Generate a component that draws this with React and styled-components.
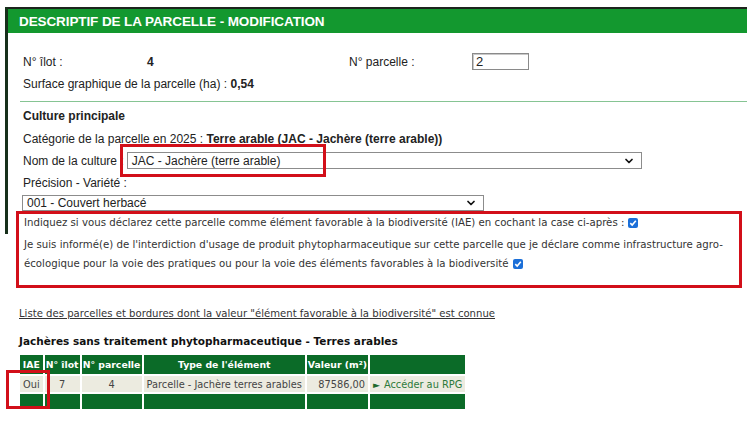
import styled, { createGlobalStyle } from "styled-components";
import { ChevronDown } from "lucide-react";

//------------------------------------------------------------------------

const GlobalStyle = createGlobalStyle`
    body {
        margin: 0;
        background: white;
        font-family: "Liberation Sans", Arial, sans-serif;
        color: #222;
    }
`;

const Page = styled.div`
    width: 747px;
    height: 436px;
    overflow: hidden;
    padding-top: 7px;
    box-sizing: border-box;
`;

const Panel = styled.div`
    position: relative;
    margin-left: 5px;
    padding-left: 3px;
    border-top: 2px solid #1d241d;

    &::before {
        content: "";
        position: absolute;
        left: 0;
        top: -2px;
        width: 3px;
        height: 227px;
        background: #17301b;
    }
`;

const Header = styled.div`
    height: 24px;
    display: flex;
    align-items: center;
    padding-left: 11px;
    background: #13982f;
    color: white;
    font-weight: bold;
    font-size: 13.5px;
    letter-spacing: -0.1px;
`;

const Fields = styled.div`
    padding: 20px 0 0 15px;
    font-size: 12px;
`;

const Row = styled.div`
    display: flex;
    align-items: center;
    height: ${(p) => p.$h || 14}px;
    margin-top: ${(p) => p.$mt || 0}px;
`;

const Cell = styled.span`
    width: ${(p) => p.$w}px;
    flex-shrink: 0;
    font-weight: ${(p) => (p.$bold ? "bold" : "normal")};
`;

const Bold = styled.b`
    font-weight: bold;
`;

const NumInput = styled.div`
    width: 52px;
    height: 15px;
    border: 1px solid #8a8a8a;
    box-shadow: inset 1px 1px 0 #c8c8c8;
    font-size: 13px;
    line-height: 15px;
    padding-left: 3px;
`;

const Rule = styled.div`
    height: 1px;
    background: #86c493;
    margin: 10px 0 0 -3px;
`;

const SelectBox = styled.div`
    width: ${(p) => p.$w}px;
    height: ${(p) => p.$h || 17}px;
    box-sizing: border-box;
    border: 1px solid #8c8c8c;
    display: flex;
    align-items: center;
    justify-content: space-between;
    padding: 0 6px 0 4px;
    margin-left: ${(p) => p.$ml || 0}px;
    font-size: 12px;
    background: white;
`;

const Mark = styled.div`
    position: absolute;
    left: ${(p) => p.$l}px;
    top: ${(p) => p.$t}px;
    width: ${(p) => p.$w}px;
    height: ${(p) => p.$h}px;
    border: 3px solid #d20f19;
    box-sizing: border-box;
    pointer-events: none;
`;

const NameRow = styled(Row)`
    position: relative;
`;

const IaeBox = styled.div`
    margin: 0 5px 0 8px;
    padding: 1px 6px 12px 5px;
    border: 3px solid #d20f19;
    font-family: "DejaVu Sans", Verdana, sans-serif;
    font-size: 10.2px;
    color: #333;
`;

const IaeLine = styled.p`
    margin: ${(p) => p.$mt || 0}px 0 0;
    line-height: ${(p) => p.$lh}px;
`;

const Tick = styled.span`
    display: inline-flex;
    vertical-align: -1px;
    margin-left: 4px;
    width: 10px;
    height: 10px;
    border-radius: 2px;
    background: #1b6fd8;
    align-items: center;
    justify-content: center;
`;

const Lower = styled.div`
    padding: 19px 0 0 19px;
    font-family: "DejaVu Sans", Verdana, sans-serif;
    font-size: 10px;
    color: #333;
`;

const ListLink = styled.div`
    text-decoration: underline;
    line-height: 14px;
    font-size: 10.1px;
`;

const Title = styled.div`
    margin-top: 13px;
    line-height: 14px;
    font-weight: bold;
    font-size: 10.5px;
    color: #111;
`;

const TableWrap = styled.div`
    position: relative;
    margin: 7px 0 0 -1px;
    width: fit-content;
`;

const Table = styled.table`
    border-collapse: separate;
    border-spacing: 2px;
    margin-top: -2px;
    font-size: 9.8px;
`;

const Th = styled.th`
    background: #0b6b28;
    color: white;
    height: 19px;
    padding: 0 1px;
    font-weight: bold;
    font-size: 9.3px;
    width: ${(p) => p.$w}px;
    white-space: nowrap;
`;

const Td = styled.td`
    background: ${(p) => (p.$foot ? "#0b6b28" : "#ecebe0")};
    height: ${(p) => (p.$foot ? 15 : 16)}px;
    padding: 0 3px;
    text-align: ${(p) => p.$align || "center"};
    color: #444;
    white-space: nowrap;
`;

const RpgLink = styled.span`
    color: #2d7a3a;
`;

const Arrow = styled.span`
    color: #1f6a2c;
    font-size: 9px;
    margin-right: 4px;
`;

//------------------------------------------------------------------------

function Tickbox() {
    return (
        <Tick>
            <svg width="8" height="8" viewBox="0 0 8 8">
                <path d="M1.3 4.2 L3.2 6 L6.8 1.8" fill="none" stroke="white" strokeWidth="1.6" />
            </svg>
        </Tick>
    );
}

function App() {
    const columns = [
        ["IAE", 18],
        ["N° îlot", 32],
        ["N° parcelle", 58],
        ["Type de l'élément", 155],
        ["Valeur (m²)", 57],
        ["", 90],
    ];

    return (
        <Page>
            <GlobalStyle />
            <Panel>
                <Header>DESCRIPTIF DE LA PARCELLE - MODIFICATION</Header>
                <Fields>
                    <Row $h={17}>
                        <Cell $w={124}>N° îlot :</Cell>
                        <Cell $w={202} $bold>4</Cell>
                        <Cell $w={123}>N° parcelle :</Cell>
                        <NumInput>2</NumInput>
                    </Row>
                    <Row $mt={7}>
                        Surface graphique de la parcelle (ha) :&nbsp;<Bold>0,54</Bold>
                    </Row>
                    <Rule />
                    <Row $mt={7}>
                        <Bold>Culture principale</Bold>
                    </Row>
                    <Row $mt={9}>
                        Catégorie de la parcelle en 2025 :&nbsp;
                        <Bold>Terre arable (JAC - Jachère (terre arable))</Bold>
                    </Row>
                    <NameRow $h={17} $mt={6}>
                        Nom de la culture :
                        <SelectBox $w={515} $ml={3}>
                            JAC - Jachère (terre arable)
                            <ChevronDown size={12} strokeWidth={3.5} color="#111" />
                        </SelectBox>
                        <Mark $l={97} $t={-8} $w={206} $h={33} />
                    </NameRow>
                    <Row $mt={7}>Précision - Variété :</Row>
                    <Row $h={16} $mt={5}>
                        <SelectBox $w={462} $h={16} $ml={-1}>
                            001 - Couvert herbacé
                            <ChevronDown size={12} strokeWidth={3.5} color="#111" />
                        </SelectBox>
                    </Row>
                </Fields>
                <IaeBox>
                    <IaeLine $lh={16}>
                        Indiquez si vous déclarez cette parcelle comme élément favorable à la
                        biodiversité (IAE) en cochant la case ci-après :
                        <Tickbox />
                    </IaeLine>
                    <IaeLine $lh={19} $mt={4}>
                        Je suis informé(e) de l'interdiction d'usage de produit
                        phytopharmaceutique sur cette parcelle que je déclare comme
                        infrastructure agro-écologique pour la voie des pratiques ou pour la
                        voie des éléments favorables à la biodiversité
                        <Tickbox />
                    </IaeLine>
                </IaeBox>
            </Panel>
            <Lower>
                <ListLink>
                    Liste des parcelles et bordures dont la valeur "élément favorable à la
                    biodiversité" est connue
                </ListLink>
                <Title>Jachères sans traitement phytopharmaceutique - Terres arables</Title>
                <TableWrap>
                    <Table>
                        <thead>
                            <tr>
                                {columns.map(([label, w], i) => (
                                    <Th key={i} $w={w}>
                                        {label}
                                    </Th>
                                ))}
                            </tr>
                        </thead>
                        <tbody>
                            <tr>
                                <Td $align="left">Oui</Td>
                                <Td>7</Td>
                                <Td>4</Td>
                                <Td $align="left">Parcelle - Jachère terres arables</Td>
                                <Td $align="right">87586,00</Td>
                                <Td $align="left">
                                    <Arrow>►</Arrow>
                                    <RpgLink>Accéder au RPG</RpgLink>
                                </Td>
                            </tr>
                            <tr>
                                {columns.map((c, i) => (
                                    <Td key={i} $foot />
                                ))}
                            </tr>
                        </tbody>
                    </Table>
                    <Mark $l={-12} $t={17} $w={44} $h={39} />
                </TableWrap>
            </Lower>
        </Page>
    );
}

export default App;
